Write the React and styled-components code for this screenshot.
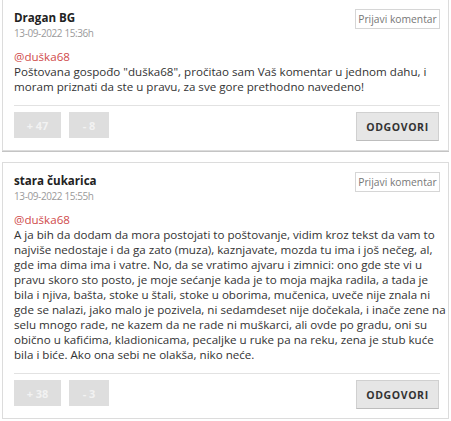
import styled, { createGlobalStyle } from "styled-components";

const GlobalStyle = createGlobalStyle`
    body {
        margin: 0;
        background: #fff;
        font-family: "Open Sans", "Liberation Sans", sans-serif;
    }
`;

// lines are kept as in the source layout
const comments = [
    {
        id: 1,
        name: "Dragan BG",
        date: "13-09-2022 15:36h",
        mention: "@duška68",
        lines: [
            "Poštovana gospođo \"duška68\", pročitao sam Vaš komentar u jednom dahu, i",
            "moram priznati da ste u pravu, za sve gore prethodno navedeno!",
        ],
        up: 47,
        down: 8,
    },
    {
        id: 2,
        name: "stara čukarica",
        date: "13-09-2022 15:55h",
        mention: "@duška68",
        lines: [
            "A ja bih da dodam da mora postojati to poštovanje, vidim kroz tekst da vam to",
            "najviše nedostaje i da ga zato (muza), kaznjavate, mozda tu ima i još nečeg, al,",
            "gde ima dima ima i vatre. No, da se vratimo ajvaru i zimnici: ono gde ste vi u",
            "pravu skoro sto posto, je moje sećanje kada je to moja majka radila, a tada je",
            "bila i njiva, bašta, stoke u štali, stoke u oborima, mučenica, uveče nije znala ni",
            "gde se nalazi, jako malo je pozivela, ni sedamdeset nije dočekala, i inače zene na",
            "selu mnogo rade, ne kazem da ne rade ni muškarci, ali ovde po gradu, oni su",
            "obično u kafićima, kladionicama, pecaljke u ruke pa na reku, zena je stub kuće",
            "bila i biće. Ako ona sebi ne olakša, niko neće.",
        ],
        up: 38,
        down: 3,
    },
];

function App() {
    return (
        <>
            <GlobalStyle/>
            <List>
                {comments.map(c => (
                    <Card key={c.id}>
                        <Header>
                            <Author>
                                <Name>{c.name}</Name>
                                <Date>{c.date}</Date>
                            </Author>
                            <ReportBtn>Prijavi komentar</ReportBtn>
                        </Header>
                        <Body>
                            <Mention>{c.mention}</Mention>
                            <Text>
                                {c.lines.map((l, i) => <Line key={i}>{l}</Line>)}
                            </Text>
                        </Body>
                        <Footer>
                            <Votes>
                                <VoteBtn $w={47}>+ {c.up}</VoteBtn>
                                <VoteBtn $w={40}>- {c.down}</VoteBtn>
                            </Votes>
                            <ReplyBtn>ODGOVORI</ReplyBtn>
                        </Footer>
                    </Card>
                ))}
            </List>
        </>
    );
}

export default App;

const List = styled.div`
    display: flex;
    flex-direction: column;
    gap: 11px;
    padding: 0 2px;
    margin-top: -1px;
`;

const Card = styled.div`
    border: 1px solid #dcdcdc;
    box-shadow: 0 1px 0 #c4c4c4;
    background: #fff;
    padding: 0 8px 9px 11px;
`;

const Header = styled.div`
    display: flex;
    justify-content: space-between;
    align-items: flex-start;
    padding-top: 9px;
`;

const Author = styled.div`
    display: flex;
    flex-direction: column;
    padding-top: 1px;
`;

const Name = styled.div`
    font-size: 11.6px;
    line-height: 16px;
    font-weight: 700;
    color: #222;
`;

const Date = styled.div`
    font-size: 10px;
    line-height: 14px;
    color: #9a9a9a;
    letter-spacing: -0.4px;
`;

const ReportBtn = styled.button`
    width: 85px;
    height: 20px;
    padding: 0;
    background: #fff;
    border: 1px solid #d6d6d6;
    font-family: inherit;
    font-size: 10.3px;
    color: #777;
    cursor: pointer;
`;

const Body = styled.div`
    margin-top: 9px;
    font-size: 11.6px;
    line-height: 15px;
`;

const Mention = styled.div`
    color: #d04a4a;
`;

const Text = styled.div`
    color: #333;
`;

const Line = styled.div`
    white-space: nowrap;
`;

const Footer = styled.div`
    margin-top: 11px;
    border-top: 1px solid #e2e2e2;
    padding-top: 6px;
    display: flex;
    justify-content: space-between;
    align-items: flex-start;
`;

const Votes = styled.div`
    display: flex;
    gap: 8px;
`;

const VoteBtn = styled.button`
    width: ${p => p.$w}px;
    height: 26px;
    padding: 0;
    border: none;
    background: #dedede;
    color: #f2f2f2;
    font-family: inherit;
    font-size: 11px;
    font-weight: 700;
`;

const ReplyBtn = styled.button`
    width: 83px;
    height: 29px;
    margin-right: 1px;
    padding: 0;
    background: #e6e6e6;
    border: 1px solid #d0d0d0;
    border-bottom-color: #bdbdbd;
    font-family: inherit;
    font-size: 10.5px;
    font-weight: 700;
    letter-spacing: 0.6px;
    color: #333;
`;
